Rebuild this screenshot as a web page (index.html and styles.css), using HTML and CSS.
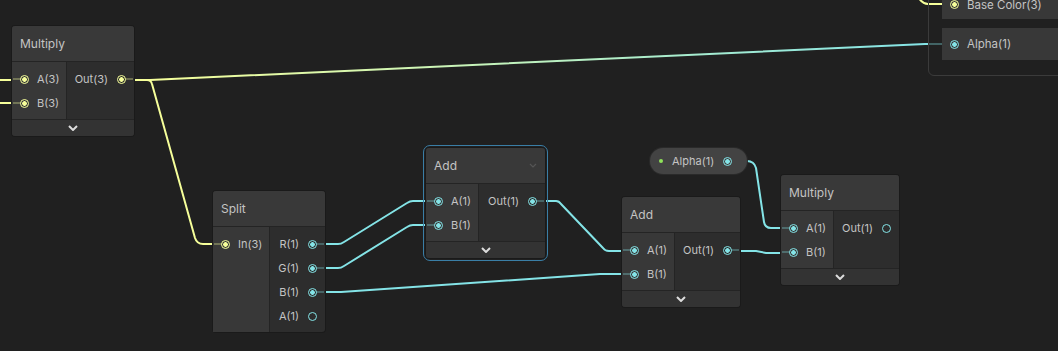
FILE: index.html
```html
<!DOCTYPE html>
<html lang="en">
<head>
    <meta charset="UTF-8">
    <meta name="viewport" content="width=device-width, initial-scale=1.0">
    <title>Shader Graph</title>
    <link rel="stylesheet" href="styles.css">
</head>
<body>
    <div class="graph">
        <svg class="wires" width="1058" height="351">
            <defs>
                <linearGradient id="fade" gradientUnits="userSpaceOnUse" x1="150" y1="0" x2="928" y2="0">
                    <stop offset="0" stop-color="#f6ff9a"/>
                    <stop offset="1" stop-color="#84e4e7"/>
                </linearGradient>
            </defs>
            <!-- incoming from off screen -->
            <path class="y" d="M0 80 H12"/>
            <path class="y" d="M0 103 H12"/>
            <path class="y" d="M916 -7 Q921 4 928 4 H942"/>
            <path class="y dim" d="M928 4 H950"/>
            <!-- multiply out -->
            <path class="y" d="M134 80 H147 Q151 80 152 84 L195 238 Q197 244 203 244 H213"/>
            <path class="fade" d="M134 80 H150 L925 44 H928"/>
            <path class="c dim" d="M928 44 H950"/>
            <!-- split -->
            <path class="c" d="M325 244 H338 Q341 244 344 242 L407 203 Q410 201 413 201 H426"/>
            <path class="c" d="M325 268 H338 Q341 268 344 266 L407 227 Q410 225 413 225 H426"/>
            <path class="c" d="M325 292 H341 L600 274 H622"/>
            <!-- add -> add -->
            <path class="c" d="M545 201 H556 Q559 201 561 204 L603 248 Q605 251 609 251 H622"/>
            <!-- alpha + add -> multiply -->
            <path class="c" d="M747 161 Q754 161 756 168 L764 222 Q765 228 771 228 H781"/>
            <path class="c" d="M740 251 H756 L766 253 H781"/>
        </svg>

        <div class="master">
            <div class="mslot base"><span class="dot y on"></span>Base Color(3)</div>
            <div class="mslot"><span class="dot c on"></span>Alpha(1)</div>
        </div>

        <div class="node n-mul">
            <div class="title">Multiply</div>
            <div class="body">
                <div class="inputs w55">
                    <div class="row"><span class="dot y on"></span>A(3)</div>
                    <div class="row"><span class="dot y on"></span>B(3)</div>
                </div>
                <div class="outputs">
                    <div class="row">Out(3)<span class="dot y on"></span></div>
                </div>
            </div>
            <div class="collapse"><svg width="10" height="6"><path d="M1 1 L5 5 L9 1"/></svg></div>
        </div>

        <div class="node n-split">
            <div class="title">Split</div>
            <div class="body">
                <div class="inputs w57">
                    <div class="row"><span class="dot y on"></span>In(3)</div>
                </div>
                <div class="outputs">
                    <div class="row">R(1)<span class="dot c on"></span></div>
                    <div class="row">G(1)<span class="dot c on"></span></div>
                    <div class="row">B(1)<span class="dot c on"></span></div>
                    <div class="row">A(1)<span class="dot c"></span></div>
                </div>
            </div>
        </div>

        <div class="node n-add selected">
            <div class="title">Add<svg class="menu" width="8" height="5"><path d="M1 1 L4 4 L7 1"/></svg></div>
            <div class="body">
                <div class="inputs w53">
                    <div class="row"><span class="dot c on"></span>A(1)</div>
                    <div class="row"><span class="dot c on"></span>B(1)</div>
                </div>
                <div class="outputs">
                    <div class="row">Out(1)<span class="dot c on"></span></div>
                </div>
            </div>
            <div class="collapse"><svg width="10" height="6"><path d="M1 1 L5 5 L9 1"/></svg></div>
        </div>

        <div class="node n-add2">
            <div class="title">Add</div>
            <div class="body">
                <div class="inputs w53">
                    <div class="row"><span class="dot c on"></span>A(1)</div>
                    <div class="row"><span class="dot c on"></span>B(1)</div>
                </div>
                <div class="outputs">
                    <div class="row">Out(1)<span class="dot c on"></span></div>
                </div>
            </div>
            <div class="collapse"><svg width="10" height="6"><path d="M1 1 L5 5 L9 1"/></svg></div>
        </div>

        <div class="prop">
            <span class="led"></span>Alpha(1)<span class="dot c on"></span>
        </div>

        <div class="node n-mul2">
            <div class="title">Multiply</div>
            <div class="body">
                <div class="inputs w53">
                    <div class="row"><span class="dot c on"></span>A(1)</div>
                    <div class="row"><span class="dot c on"></span>B(1)</div>
                </div>
                <div class="outputs">
                    <div class="row">Out(1)<span class="dot c"></span></div>
                </div>
            </div>
            <div class="collapse"><svg width="10" height="6"><path d="M1 1 L5 5 L9 1"/></svg></div>
        </div>
    </div>
</body>
</html>
```

FILE: styles.css
```css
* {
    margin: 0;
    padding: 0;
    box-sizing: border-box;
}
body {
    background-color: #202020;
    font-family: Inter, "Noto Sans", sans-serif;
    color: #c4c4c4;
    overflow: hidden;
}
.graph {
    position: relative;
    width: 1058px;
    height: 351px;
    overflow: hidden;
}
.wires {
    position: absolute;
    left: 0;
    top: 0;
}
.wires path {
    fill: none;
    stroke-width: 2;
    stroke-linejoin: round;
}
.wires .y {
    stroke: #f6ff9a;
}
.wires .c {
    stroke: #84e4e7;
}
.wires .fade {
    stroke: url(#fade);
}
.wires .dim {
    opacity: 0.35;
}

/* nodes */
.node {
    position: absolute;
    background-color: #2d2d2d;
    border-radius: 3px;
    box-shadow: 0 0 0 1px #1a1a1a;
}
.n-mul { left: 12px; top: 26px; width: 122px; }
.n-split { left: 213px; top: 191px; width: 112px; }
.n-add { left: 426px; top: 148px; width: 119px; }
.n-add2 { left: 622px; top: 197px; width: 118px; }
.n-mul2 { left: 781px; top: 175px; width: 118px; }

.selected::before {
    content: "";
    position: absolute;
    left: -3px;
    top: -3px;
    right: -3px;
    bottom: -3px;
    border: 1px solid #3a7ea6;
    border-radius: 7px;
}
.title {
    height: 36px;
    padding: 0 8px;
    background-color: #393939;
    border-bottom: 1px solid #242424;
    border-radius: 3px 3px 0 0;
    display: flex;
    align-items: center;
    justify-content: space-between;
    font-size: 12px;
}
.title .menu path {
    fill: none;
    stroke: #555;
    stroke-width: 1.2;
}
.body {
    display: flex;
}
.inputs,
.outputs {
    padding: 5px 0 4px;
}
.inputs {
    background-color: #383838;
    border-right: 1px solid #242424;
}
.outputs {
    flex: 1;
}
.w53 { width: 53px; }
.w55 { width: 55px; }
.w57 { width: 57px; }
.row {
    height: 24px;
    display: flex;
    align-items: center;
    font-size: 11px;
}
.inputs .row {
    padding-left: 8px;
    gap: 8px;
}
.outputs .row {
    justify-content: flex-end;
    padding-right: 8px;
    gap: 9px;
}
.collapse {
    height: 17px;
    background-color: #333333;
    border-top: 1px solid #242424;
    border-radius: 0 0 3px 3px;
    display: flex;
    align-items: center;
    justify-content: center;
}
.collapse path {
    fill: none;
    stroke: #dcdcdc;
    stroke-width: 2;
}

/* ports */
.dot {
    position: relative;
    flex: none;
    width: 9px;
    height: 9px;
    border: 1.5px solid currentColor;
    border-radius: 50%;
}
.dot.y { color: #f6ff9a; }
.dot.c { color: #84e4e7; }
.dot.on {
    background: radial-gradient(circle, currentColor 0 2px, transparent 2.6px);
}
.inputs .dot.on::before,
.outputs .dot.on::after {
    content: "";
    position: absolute;
    top: 50%;
    width: 8px;
    height: 2px;
    margin-top: -1px;
    background-color: currentColor;
    opacity: 0.3;
}
.inputs .dot.on::before { right: 100%; }
.outputs .dot.on::after { left: 100%; }

/* property pill */
.prop {
    position: absolute;
    left: 650px;
    top: 148px;
    width: 97px;
    height: 26px;
    padding-left: 9px;
    border-radius: 13px;
    background-color: #434343;
    box-shadow: 0 0 0 1px #2a2a2a;
    display: flex;
    align-items: center;
    font-size: 11px;
}
.prop .led {
    width: 4px;
    height: 4px;
    border-radius: 50%;
    background-color: #8fe35a;
    margin-right: 9px;
}
.prop .dot {
    margin-left: 9px;
}

/* master stack */
.master {
    position: absolute;
    left: 928px;
    top: -30px;
    width: 160px;
    height: 106px;
    border: 1px solid #3b3b3b;
    border-radius: 6px;
    padding: 19px 0 0 13px;
    display: flex;
    flex-direction: column;
    gap: 9px;
}
.mslot {
    height: 32px;
    padding-left: 8px;
    background-color: #383838;
    display: flex;
    align-items: center;
    gap: 8px;
    font-size: 11.5px;
}
.mslot.base {
    height: 29px;
}
```
